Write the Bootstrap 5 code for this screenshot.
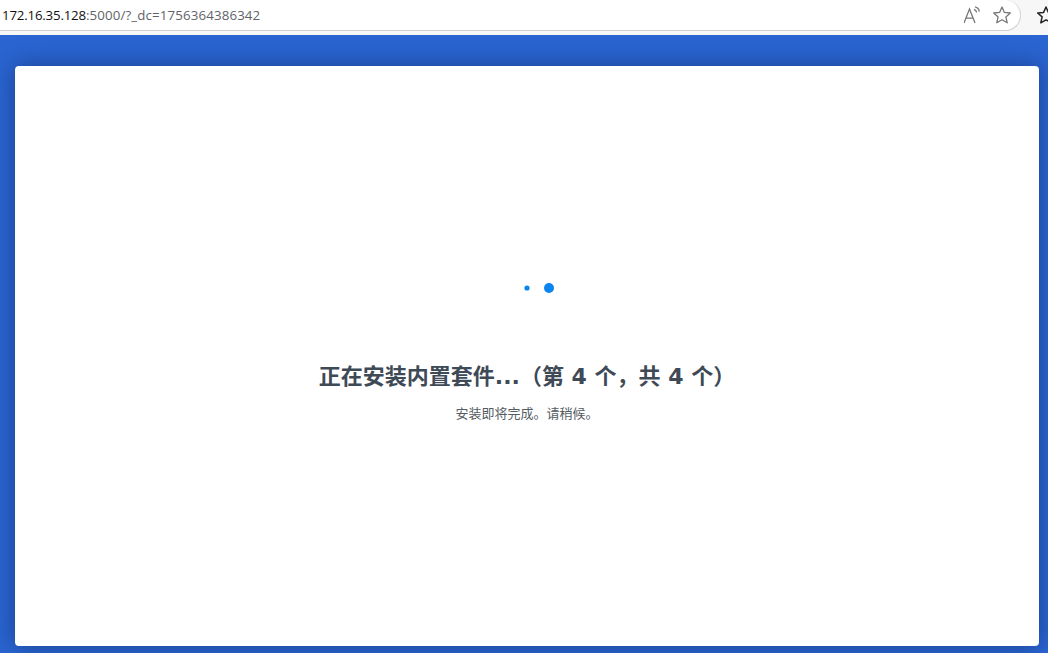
<!DOCTYPE html>
<html lang="zh-CN">
<head>
    <meta charset="UTF-8">
    <meta name="viewport" content="width=device-width, initial-scale=1.0">
    <title>正在安装内置套件</title>
    <link href="https://cdn.jsdelivr.net/npm/bootstrap@5.3.0/dist/css/bootstrap.min.css" rel="stylesheet">
    <style>
        html, body {
            height: 100%;
        }
        body {
            background: #fff;
            overflow: hidden;
            font-family: "DejaVu Sans", "Noto Sans CJK SC", sans-serif;
        }
        .browser-bar {
            height: 35px;
            background: #f7f7f7;
            flex-shrink: 0;
        }
        .address-box {
            height: 31px;
            width: 1021px;
            flex-shrink: 0;
            background: #fff;
            border-right: 1px solid #d0d0d0;
            border-bottom: 1px solid #d0d0d0;
            border-bottom-right-radius: 16px;
            border-top-right-radius: 16px;
            padding-left: 2px;
            padding-right: 8px;
        }
        .url-text {
            font-family: "Open Sans", "Liberation Sans", sans-serif;
            font-size: 13.3px;
            letter-spacing: .13px;
            color: #5f6368;
            line-height: 30px;
        }
        .url-host {
            color: #111;
            letter-spacing: -.2px;
        }
        .bar-icon {
            display: block;
            width: 20px;
            height: 20px;
            flex-shrink: 0;
        }
        .fav-peek {
            margin-left: 15px;
            margin-top: 5px;
        }
        .page-area {
            flex: 1 1 auto;
            min-height: 0;
            padding: 31px 9px 7px 15px;
            background: #2b65d1;
        }
        .install-panel {
            height: 100%;
            background: #fff;
            border-radius: 4px;
            box-shadow: 0 0 24px rgba(10, 35, 90, .55);
            padding-top: 216px;
        }
        .loader-dots {
            height: 12px;
            width: 100%;
        }
        .loader-dots svg {
            display: block;
            margin: 0 auto;
        }
        .install-title {
            margin: 67px 0 0;
            font-size: 22px;
            line-height: 32px;
            font-weight: 700;
            color: #3f4a57;
        }
        .install-note {
            margin: 12px 0 0;
            font-size: 13px;
            line-height: 18px;
            color: #555c63;
        }
    </style>
</head>
<body class="d-flex flex-column">
    <!-- browser chrome -->
    <div class="browser-bar d-flex align-items-start">
        <div class="address-box d-flex align-items-center justify-content-between">
            <span class="url-text"><span class="url-host">172.16.35.128</span>:5000/?_dc=1756364386342</span>
            <div class="d-flex align-items-center gap-2">
                <svg class="bar-icon" viewBox="0 0 20 20" fill="none" stroke="#777" stroke-width="1.3">
                    <path d="M0 18 5.5 4 11 18M1.9 13.2h7.2"/>
                    <path d="M10 4.5c1.5.4 2.4 1.5 2.6 3M11 1.8c2.6.5 4 2.3 4.3 4.8"/>
                </svg>
                <svg class="bar-icon" viewBox="0 0 20 20" fill="none" stroke="#777" stroke-width="1.3" stroke-linejoin="round">
                    <path d="M10 2 12.4 7.4 18.3 8 13.9 11.9 15.2 17.8 10 14.8 4.8 17.8 6.1 11.9 1.7 8 7.6 7.4Z"/>
                </svg>
            </div>
        </div>
        <svg class="bar-icon fav-peek" viewBox="0 0 20 20" fill="none" stroke="#222" stroke-width="1.5" stroke-linejoin="round">
            <path d="M10 2 12.4 7.4 18.3 8 13.9 11.9 15.2 17.8 10 14.8 4.8 17.8 6.1 11.9 1.7 8 7.6 7.4Z"/>
        </svg>
    </div>

    <!-- page -->
    <div class="page-area">
        <div class="install-panel text-center">
            <div class="loader-dots">
                <svg width="84" height="12" viewBox="0 0 84 12">
                    <circle cx="42" cy="6" r="2.6" fill="#0a84ef"/>
                    <circle cx="64" cy="6" r="5" fill="#0a84ef"/>
                </svg>
            </div>
            <h1 class="install-title">正在安装内置套件...（第 4 个，共 4 个）</h1>
            <p class="install-note">安装即将完成。请稍候。</p>
        </div>
    </div>

    <script src="https://cdn.jsdelivr.net/npm/bootstrap@5.3.0/dist/js/bootstrap.bundle.min.js"></script>
</body>
</html>
